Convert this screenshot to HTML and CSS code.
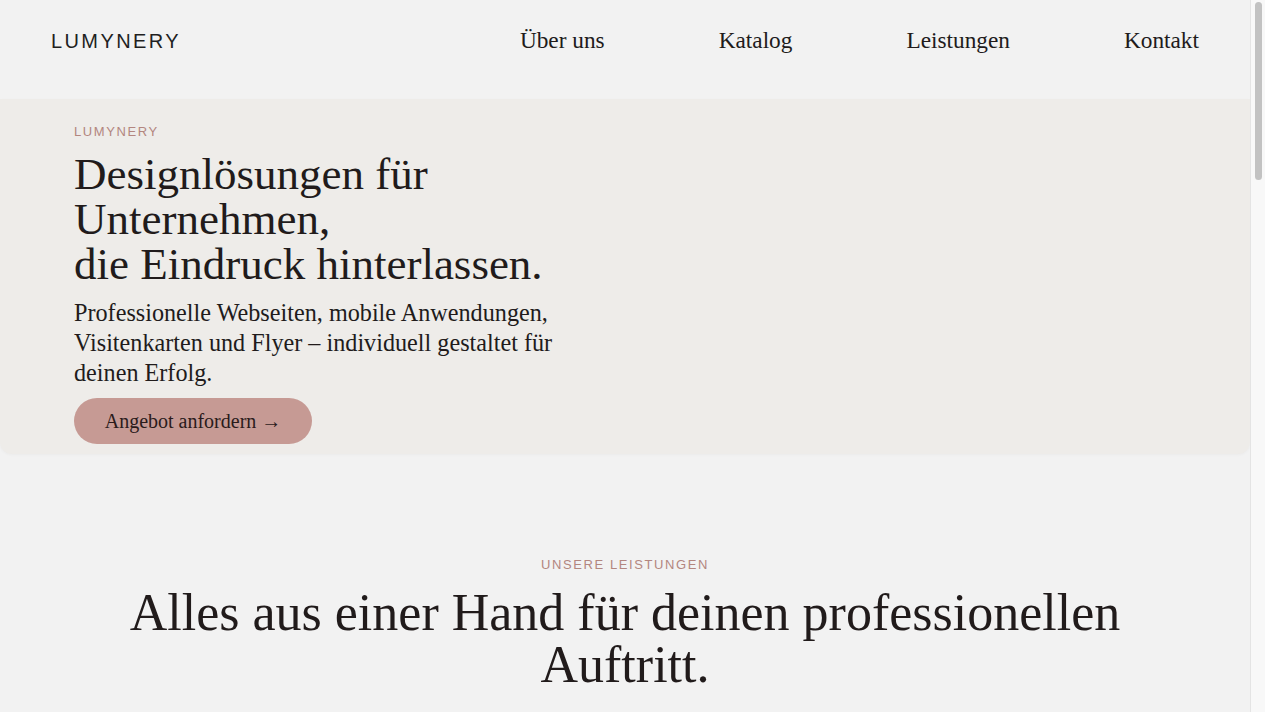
FILE: index.html
```html
<!DOCTYPE html>
<html lang="de">
<head>
<meta charset="utf-8">
<title>Lumynery – Designlösungen</title>
<link rel="stylesheet" href="styles.css">
</head>
<body>
<div class="page">
<header class="site-header">
  <a class="logo" href="#">LUMYNERY</a>
  <nav class="main-nav">
    <a href="#">Über uns</a>
    <a href="#">Katalog</a>
    <a href="#">Leistungen</a>
    <a href="#">Kontakt</a>
  </nav>
</header>

<section class="hero">
  <div class="hero-inner">
    <p class="eyebrow">LUMYNERY</p>
    <h1 class="hero-title"><span class="line">Designlösungen für</span><span class="line">Unternehmen,</span><span class="line">die Eindruck hinterlassen.</span></h1>
    <p class="hero-text">Professionelle Webseiten, mobile Anwendungen,<br>Visitenkarten und Flyer – individuell gestaltet für<br>deinen Erfolg.</p>
    <a class="btn" href="#">Angebot anfordern →</a>
  </div>
</section>

<section class="services">
  <p class="eyebrow eyebrow-center">UNSERE LEISTUNGEN</p>
  <h2 class="section-title">Alles aus einer Hand für deinen professionellen<br>Auftritt.</h2>
  <div class="service-grid">
    <article class="service-card">
      <h3>Webseiten</h3>
      <p>Moderne, schnelle und responsive Webseiten, die deine Marke stark präsentieren.</p>
    </article>
    <article class="service-card">
      <h3>Mobile Anwendungen</h3>
      <p>Intuitive Apps für iOS und Android – von der Idee bis zur Veröffentlichung.</p>
    </article>
    <article class="service-card">
      <h3>Visitenkarten</h3>
      <p>Hochwertige Visitenkarten, die im Gedächtnis bleiben.</p>
    </article>
    <article class="service-card">
      <h3>Flyer</h3>
      <p>Aussagekräftige Flyer für Events, Angebote und Kampagnen.</p>
    </article>
  </div>
</section>

<section class="catalog">
  <p class="eyebrow eyebrow-center">KATALOG</p>
  <h2 class="section-title">Ausgewählte Arbeiten</h2>
  <div class="catalog-grid">
    <div class="catalog-item"></div>
    <div class="catalog-item"></div>
    <div class="catalog-item"></div>
    <div class="catalog-item"></div>
    <div class="catalog-item"></div>
    <div class="catalog-item"></div>
  </div>
</section>

<section class="contact">
  <p class="eyebrow eyebrow-center">KONTAKT</p>
  <h2 class="section-title">Lass uns gemeinsam starten.</h2>
  <a class="btn" href="#">Angebot anfordern →</a>
</section>

<footer class="site-footer">
  <span>© 2024 LUMYNERY</span>
</footer>
</div>
<div class="scrollbar" aria-hidden="true"><div class="scrollbar-thumb"></div></div>
</body>
</html>
```
FILE: styles.css
```css
* { box-sizing: border-box; }

html, body {
  margin: 0;
  padding: 0;
}

body {
  background: #f2f2f2;
  color: #211b1b;
  font-family: "Liberation Serif", "Times New Roman", serif;
  display: grid;
  grid-template-columns: minmax(0, 1fr) 15px;
}

.scrollbar {
  background: #f8f8f8;
  border-left: 1px solid #e4e4e4;
  padding: 2px 3px 0 4px;
}

.scrollbar-thumb {
  height: 178px;
  border-radius: 4px;
  background: #c2c2c2;
}

a { color: inherit; text-decoration: none; }

.site-header {
  height: 99px;
  padding: 26px 51px 0 51px;
  display: flex;
  justify-content: space-between;
  align-items: baseline;
}

.logo {
  font-family: "Liberation Sans", Arial, sans-serif;
  font-size: 20px;
  line-height: 24px;
  letter-spacing: 2.4px;
  color: #1f1f1f;
}

.main-nav {
  display: flex;
  gap: 114px;
  font-size: 23.3px;
  line-height: 28px;
}

.hero {
  background: #eeece9;
  border-radius: 0 0 12px 12px;
  box-shadow: 0 1px 3px rgba(0, 0, 0, 0.03);
}

.hero-inner {
  padding: 25px 74px 10px;
  display: flex;
  flex-direction: column;
  align-items: flex-start;
}

.eyebrow {
  margin: 0;
  font-family: "Liberation Sans", Arial, sans-serif;
  font-size: 13px;
  line-height: 16px;
  letter-spacing: 1.6px;
  color: #b3867f;
}

.eyebrow-center { text-align: center; }

.hero-title {
  margin: 12px 0 0;
  font-weight: normal;
  font-size: 45px;
  line-height: 45px;
}

.hero-title .line {
  display: block;
  height: 45px;
}

.hero-text {
  margin: 11px 0 0;
  font-size: 24.2px;
  line-height: 30px;
}

.btn {
  margin-top: 10px;
  display: inline-flex;
  align-items: center;
  justify-content: center;
  width: 238px;
  height: 46px;
  border-radius: 23px;
  background: #c69a94;
  color: #2a1b1b;
  font-size: 20px;
}

.services {
  padding: 103px 40px 80px;
}

.section-title {
  margin: 14px 0 0;
  text-align: center;
  font-weight: normal;
  font-size: 52px;
  line-height: 52px;
}

.service-grid {
  margin: 70px auto 0;
  max-width: 1100px;
  display: grid;
  grid-template-columns: repeat(2, 1fr);
  gap: 32px;
}

.service-card {
  background: #eeece9;
  border-radius: 12px;
  padding: 40px;
  min-height: 260px;
}

.service-card h3 {
  margin: 0 0 16px;
  font-weight: normal;
  font-size: 30px;
}

.service-card p {
  margin: 0;
  font-size: 20px;
  line-height: 30px;
}

.catalog {
  padding: 60px 40px 80px;
}

.catalog-grid {
  margin: 60px auto 0;
  max-width: 1100px;
  display: grid;
  grid-template-columns: repeat(3, 1fr);
  gap: 24px;
}

.catalog-item {
  height: 260px;
  border-radius: 12px;
  background: #e6e1dc;
}

.contact {
  padding: 80px 40px 260px;
  display: flex;
  flex-direction: column;
  align-items: center;
}

.contact .btn { margin-top: 40px; }

.site-footer {
  padding: 40px 51px;
  font-family: "Liberation Sans", Arial, sans-serif;
  font-size: 13px;
  letter-spacing: 1.6px;
  color: #777;
  text-align: center;
}
```
